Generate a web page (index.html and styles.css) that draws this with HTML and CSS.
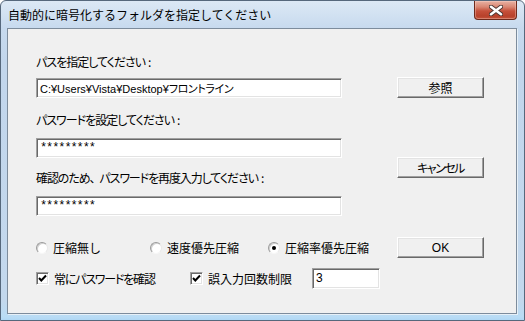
FILE: index.html
```html
<!DOCTYPE html>
<html lang="ja">
<head>
<meta charset="utf-8">
<title>暗号化</title>
<link rel="stylesheet" href="styles.css">
</head>
<body>
<div class="window">
  <div class="titlebar">
    <span class="title">自動的に暗号化するフォルダを指定してください</span>
    <div class="close">
      <svg width="14" height="11" viewBox="0 0 14 11">
        <path d="M2 1.8 L12 9.2 M12 1.8 L2 9.2" stroke="#4a3430" stroke-width="4.4" stroke-linecap="round"/>
        <path d="M2 1.8 L12 9.2 M12 1.8 L2 9.2" stroke="#ffffff" stroke-width="2.6" stroke-linecap="round"/>
      </svg>
    </div>
  </div>
  <div class="client">
    <div class="upper">
      <div class="fields">
        <div class="label l1">パスを指定してください<span class="colon">:</span></div>
        <div class="edit e1">C:¥Users¥Vista¥Desktop¥<span class="kana">フロントライン</span></div>
        <div class="label l2">パスワードを設定してください<span class="colon">:</span></div>
        <div class="edit e2 pw">*********</div>
        <div class="label l3">確認のため<span class="comma">、</span>パスワードを再度入力してください<span class="colon">:</span></div>
        <div class="edit e3 pw">*********</div>
      </div>
      <div class="buttons">
        <div class="btn btn-browse">参照</div>
        <div class="btn btn-cancel"><span class="kt">キャンセル</span></div>
      </div>
    </div>
    <div class="options">
      <div class="radio r1"><span class="rb"></span><span class="txt">圧縮無し</span></div>
      <div class="radio r2"><span class="rb"></span><span class="txt">速度優先圧縮</span></div>
      <div class="radio r3"><span class="rb on"></span><span class="txt">圧縮率優先圧縮</span></div>
      <div class="btn btn-ok">OK</div>
    </div>
    <div class="checks">
      <div class="check c1"><span class="cb"><svg width="9" height="9" viewBox="0 0 9 9"><path d="M1 4 L3.3 6.5 L8 1.5" fill="none" stroke="#000" stroke-width="2"/></svg></span><span class="txt tight">常にパスワードを確認</span></div>
      <div class="check c2"><span class="cb"><svg width="9" height="9" viewBox="0 0 9 9"><path d="M1 4 L3.3 6.5 L8 1.5" fill="none" stroke="#000" stroke-width="2"/></svg></span><span class="txt">誤入力回数制限</span></div>
      <div class="edit edit-small">3</div>
    </div>
  </div>
</div>
</body>
</html>
```

FILE: styles.css
```css
* { box-sizing: border-box; }
html, body { margin: 0; padding: 0; }
body {
  width: 525px;
  height: 321px;
  font-family: "Noto Sans CJK JP", sans-serif;
  font-size: 12px;
  color: #000;
  background: #ffffff;
}
.window {
  width: 525px;
  height: 321px;
  border: 1px solid #56687c;
  border-radius: 6px 6px 0 0;
  padding: 0 7px 6px 6px;
  display: flex;
  flex-direction: column;
  background: linear-gradient(to bottom, #dce8f5 0px, #d3e2f2 12px, #c7daee 27px, #c2d6ec 60px, #c3d8ed 300px, #b9dcf5 316px, #a9d3f3 321px);
}
.titlebar {
  height: 27px;
  display: flex;
  align-items: center;
  padding-left: 1px;
  position: relative;
}
.title {
  font-size: 12px;
  line-height: 14px;
  color: #000;
}
.close {
  position: absolute;
  right: 0;
  top: 0;
  width: 43px;
  height: 19px;
  border: 1px solid #6e2a1c;
  border-top: none;
  border-radius: 0 0 4px 4px;
  background: linear-gradient(to bottom, #e8b2a4 0px, #d98672 6px, #c5503a 10px, #b8412b 15px, #c85a40 19px);
  box-shadow: inset 0 0 0 1px rgba(255,220,210,0.35);
  display: flex;
  align-items: center;
  justify-content: center;
}
.client {
  flex: 1;
  background: #f0f0f0;
  border: 1px solid #7d8c9c;
  box-shadow: 1px 1px 0 #e6f0f8;
  padding: 26px 32px 0 28px;
  display: flex;
  flex-direction: column;
}
.upper {
  display: flex;
}
.fields {
  width: 306px;
  display: flex;
  flex-direction: column;
}
.label {
  line-height: 14px;
  height: 14px;
  font-feature-settings: "palt";
  letter-spacing: -1px;
  white-space: nowrap;
}
.colon {
  margin-left: 3px;
  letter-spacing: 0;
}
.comma {
  font-feature-settings: normal;
  letter-spacing: -2px;
}
.l1 { margin-bottom: 9px; }
.l2 { margin-bottom: 11px; }
.l3 { margin-bottom: 11px; letter-spacing: -1.1px; }
.edit {
  height: 20px;
  background: #fff;
  border: 1px solid;
  border-color: #a0a0a0 #ffffff #ffffff #a0a0a0;
  box-shadow: inset 1px 1px 0 #696969, inset -1px -1px 0 #e3e3e3;
  padding: 0 0 0 3px;
  font-family: "Liberation Sans", "Noto Sans CJK JP", sans-serif;
  font-size: 11px;
  line-height: 18px;
  white-space: nowrap;
  overflow: hidden;
}
.e1 { margin-bottom: 15px; }
.e2 { margin-bottom: 13px; }
.kana {
  font-family: "Noto Sans CJK JP", sans-serif;
  font-feature-settings: "palt";
  letter-spacing: -0.4px;
}
.pw {
  font-family: "Liberation Mono", monospace;
  font-size: 12px;
  letter-spacing: -1.1px;
  color: #000;
}
.buttons {
  margin-left: 55px;
  width: 87px;
  display: flex;
  flex-direction: column;
}
.btn {
  width: 87px;
  height: 21px;
  background: #f0f0f0;
  border: 1px solid;
  border-color: #ffffff #696969 #696969 #ffffff;
  box-shadow: inset -1px -1px 0 #a0a0a0, inset 1px 1px 0 #e3e3e3;
  display: flex;
  align-items: center;
  justify-content: center;
  font-size: 12px;
  line-height: 14px;
}
.kt {
  font-feature-settings: "palt";
  letter-spacing: -1.5px;
}
.btn-browse { margin-top: 22px; }
.btn-cancel { margin-top: 59px; }
.btn-ok {
  margin-left: auto;
  font-family: "Liberation Sans", sans-serif;
  font-size: 12px;
}
.options {
  margin-top: 21px;
  height: 21px;
  display: flex;
  align-items: center;
}
.radio, .check {
  display: flex;
  align-items: center;
  white-space: nowrap;
}
.radio .txt, .check .txt {
  line-height: 14px;
}
.tight {
  font-feature-settings: "palt";
  letter-spacing: -1.2px;
}
.r1 { width: 114px; }
.r2 { width: 118px; }
.r3 { width: 110px; }
.rb {
  width: 12px;
  height: 12px;
  border-radius: 50%;
  background: #fff;
  border: 1px solid;
  border-color: #9a9a9a #e8e8e8 #f6f6f6 #9a9a9a;
  box-shadow: inset 1px 1px 0 #d0d0d0;
  margin-right: 5px;
  position: relative;
}
.rb.on::after {
  content: "";
  position: absolute;
  left: 3px;
  top: 3px;
  width: 4px;
  height: 4px;
  border-radius: 50%;
  background: #000;
}
.checks {
  margin-top: 10px;
  height: 21px;
  display: flex;
  align-items: center;
}
.cb {
  width: 13px;
  height: 13px;
  background: #fff;
  border: 1px solid;
  border-color: #a0a0a0 #ffffff #ffffff #a0a0a0;
  box-shadow: inset 1px 1px 0 #696969, inset -1px -1px 0 #e3e3e3;
  margin-right: 5px;
  display: flex;
  align-items: center;
  justify-content: center;
}
.cb svg { display: block; }
.c1 { width: 154px; }
.c2 { width: 122px; }
.edit-small {
  width: 68px;
  height: 21px;
  font-size: 12px;
  line-height: 19px;
}
```
